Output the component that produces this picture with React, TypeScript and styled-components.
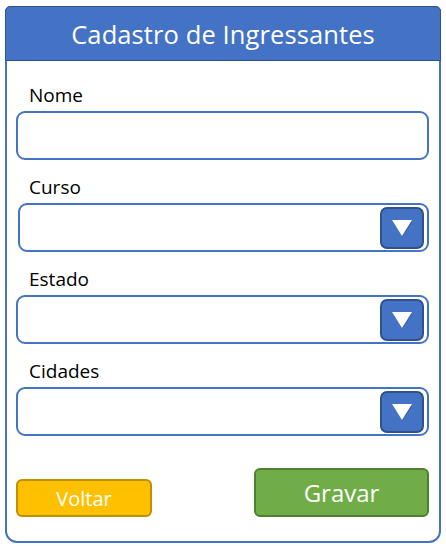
import styled, { createGlobalStyle } from 'styled-components'

const GlobalStyle = createGlobalStyle`
    html, body {
        margin: 0;
        padding: 0;
        background: #ffffff;
        font-family: "Open Sans", "Liberation Sans", sans-serif;
    }
`

const Frame = styled.main`
    box-sizing: border-box;
    width: 436px;
    height: 537px;
    margin: 6px 0 0 5px;
    border: 2px solid #4472c4;
    border-radius: 6px 6px 12px 12px;
    display: flex;
    flex-direction: column;
`

const Header = styled.header`
    box-sizing: border-box;
    height: 55px;
    margin: -2px -2px 0 -2px;
    background: #4472c4;
    border: 1.5px solid #2f528f;
    border-radius: 5px 5px 0 0;
    display: flex;
    align-items: center;
    justify-content: center;
    color: #ffffff;
    font-size: 25.5px;
    letter-spacing: 0.1px;
`

const Form = styled.section`
    flex: 1;
    display: flex;
    flex-direction: column;
    padding: 23px 10px 24px 9px;
`

const Field = styled.div`
    display: flex;
    flex-direction: column;
    margin-bottom: 16px;
`

const Label = styled.label`
    height: 22px;
    line-height: 22px;
    margin: 0 0 5px 13px;
    font-size: 19px;
    color: #000000;
`

const Box = styled.div<{ $inset?: number }>`
    box-sizing: border-box;
    height: 49px;
    margin-left: ${p => p.$inset ?? 0}px;
    border: 2px solid #4472c4;
    border-radius: 9px;
    display: flex;
    align-items: center;
    justify-content: flex-end;
    padding: 0 3px;
`

const DropButton = styled.div`
    box-sizing: border-box;
    width: 44px;
    height: 42px;
    background: #4472c4;
    border: 2px solid #2f528f;
    border-radius: 7px;
    display: flex;
    align-items: center;
    justify-content: center;
`

const Actions = styled.div`
    margin-top: auto;
    display: flex;
    justify-content: space-between;
    align-items: flex-end;
`

const Button = styled.button<{ $color: string; $edge: string; $w: number; $h: number; $size: number }>`
    box-sizing: border-box;
    width: ${p => p.$w}px;
    height: ${p => p.$h}px;
    background: ${p => p.$color};
    border: 2px solid ${p => p.$edge};
    border-radius: 6px;
    color: #ffffff;
    font-family: "Open Sans", "Liberation Sans", sans-serif;
    font-size: ${p => p.$size}px;
    padding: 0;
    display: flex;
    align-items: center;
    justify-content: center;
`

function Arrow() {
    return (
        <svg width="22" height="18" viewBox="0 0 22 18">
            <polygon points="1,2 21,2 11,17" fill="#2f528f" opacity="0.5" transform="translate(0.6,0.8)" />
            <polygon points="1,1 21,1 11,17" fill="#ffffff" />
        </svg>
    )
}

function Select({ label, inset }: { label: string; inset?: number }) {
    return (
        <Field>
            <Label>{label}</Label>
            <Box $inset={inset}>
                <DropButton>
                    <Arrow />
                </DropButton>
            </Box>
        </Field>
    )
}

export default function App() {
    return (
        <>
            <GlobalStyle />
            <Frame>
                <Header>Cadastro de Ingressantes</Header>
                <Form>
                    <Field>
                        <Label>Nome</Label>
                        <Box />
                    </Field>
                    <Select label="Curso" inset={2} />
                    <Select label="Estado" />
                    <Select label="Cidades" />
                    <Actions>
                        <Button $color="#ffc000" $edge="#bf9000" $w={136} $h={38} $size={20}>Voltar</Button>
                        <Button $color="#70ad47" $edge="#507e32" $w={175} $h={49} $size={24}>Gravar</Button>
                    </Actions>
                </Form>
            </Frame>
        </>
    )
}
